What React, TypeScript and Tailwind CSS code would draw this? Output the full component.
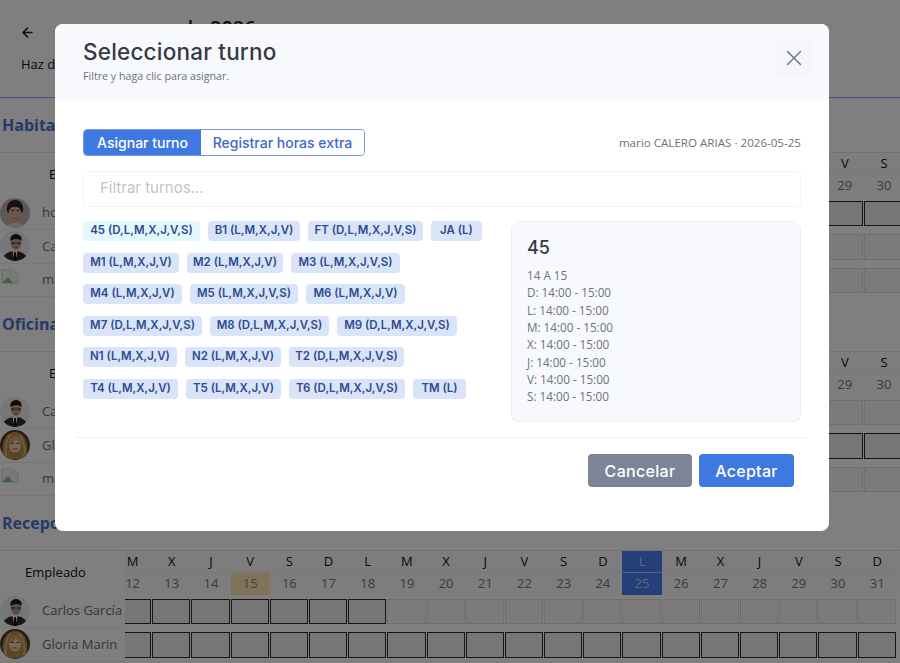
import React from 'react';
import { ArrowLeft, X } from 'lucide-react';

const DAYS = [
  ['M', 12], ['X', 13], ['J', 14], ['V', 15], ['S', 16], ['D', 17], ['L', 18], ['M', 19], ['X', 20], ['J', 21],
  ['V', 22], ['S', 23], ['D', 24], ['L', 25], ['M', 26], ['X', 27], ['J', 28], ['V', 29], ['S', 30], ['D', 31],
] as const;

const SHIFTS = [
  [
    ['45 (D,L,M,X,J,V,S)', 'w-[117px]'], ['B1 (L,M,X,J,V)', 'w-[92px]'], ['FT (D,L,M,X,J,V,S)', 'w-[115px]'], ['JA (L)', 'w-[51px]'],
  ],
  [
    ['M1 (L,M,X,J,V)', 'w-[96px]'], ['M2 (L,M,X,J,V)', 'w-[96px]'], ['M3 (L,M,X,J,V,S)', 'w-[109px]'],
  ],
  [
    ['M4 (L,M,X,J,V)', 'w-[99px]'], ['M5 (L,M,X,J,V,S)', 'w-[108px]'], ['M6 (L,M,X,J,V)', 'w-[99px]'],
  ],
  [
    ['M7 (D,L,M,X,J,V,S)', 'w-[119px]'], ['M8 (D,L,M,X,J,V,S)', 'w-[119px]'], ['M9 (D,L,M,X,J,V,S)', 'w-[120px]'],
  ],
  [
    ['N1 (L,M,X,J,V)', 'w-[94px]'], ['N2 (L,M,X,J,V)', 'w-[96px]'], ['T2 (D,L,M,X,J,V,S)', 'w-[115px]'],
  ],
  [
    ['T4 (L,M,X,J,V)', 'w-[95px]'], ['T5 (L,M,X,J,V)', 'w-[95px]'], ['T6 (D,L,M,X,J,V,S)', 'w-[116px]'], ['TM (L)', 'w-[53px]'],
  ],
];

const HOURS = ['14 A 15', 'D: 14:00 - 15:00', 'L: 14:00 - 15:00', 'M: 14:00 - 15:00', 'X: 14:00 - 15:00', 'J: 14:00 - 15:00', 'V: 14:00 - 15:00', 'S: 14:00 - 15:00'];

type AvatarKind = 'young' | 'suit' | 'blonde' | 'broken';

const Avatar = ({ kind }: { kind: AvatarKind }) => {
  if (kind === 'broken') {
    return (
      <svg width="30" height="30" viewBox="0 0 30 30" className="shrink-0">
        <path d="M2 5h11l5 5v8H2z" fill="#f5f5f5" stroke="#bbb" strokeWidth="0.8" />
        <path d="M2 18l6-6 5 6z" fill="#7fc27a" />
        <path d="M9 2l7 4-5 7z" fill="#e6f2e0" />
      </svg>
    );
  }
  if (kind === 'young') {
    return (
      <svg width="30" height="30" viewBox="0 0 30 30" className="shrink-0 rounded-full">
        <rect width="30" height="30" fill="#b9b2ae" />
        <path d="M7 13c-1-8 4-11 8-11s9 3 8 11l-1 2H8z" fill="#2f2119" />
        <ellipse cx="15" cy="16" rx="6.500" ry="9" fill="#d9a88f" />
        <path d="M8 13c2-5 11-6 14 0l-1-6-6-2-6 2z" fill="#2f2119" />
        <path d="M11 12.500h3M16.500 12.500h3" stroke="#3a2a20" strokeWidth="0.8" />
        <path d="M12.500 20.500h5" stroke="#a8705c" strokeWidth="0.8" />
        <path d="M5 30c2-4 6-5 10-5s8 1 10 5z" fill="#d8d4d0" />
      </svg>
    );
  }
  if (kind === 'suit') {
    return (
      <svg width="30" height="30" viewBox="0 0 30 30" className="shrink-0 rounded-full">
        <rect width="30" height="30" fill="#ececec" />
        <path d="M2 30c1-7 7-10 13-10s12 3 13 10z" fill="#2c2c2e" />
        <path d="M12.500 20h5l-1 6h-3z" fill="#f3f3f3" />
        <path d="M14.200 21h1.600l.8 9h-3.200z" fill="#111" />
        <ellipse cx="16" cy="12" rx="5" ry="7" fill="#c99d86" />
        <path d="M10.500 10c-1-5 3-7 5.500-7s6.500 2 5.500 7c-2-2.500-7-3-11 0z" fill="#1d1714" />
        <path d="M11.500 11.500h3.500v1.500h-3.500zM17 11.500h3.500v1.500H17z" fill="none" stroke="#222" strokeWidth="0.6" />
        <path d="M14 16.500h4" stroke="#7a5546" strokeWidth="0.7" />
      </svg>
    );
  }
  return (
    <svg width="30" height="30" viewBox="0 0 30 30" className="shrink-0 rounded-full">
      <rect width="30" height="30" fill="#4f3a28" />
      <path d="M3 24C1 9 8 2 15 2s14 7 12 22l-3 5H6z" fill="#b98a4e" />
      <path d="M6 26C4 14 9 6 11 5M24 26c2-12-3-20-5-21" fill="none" stroke="#e0bd80" strokeWidth="1.500" />
      <ellipse cx="15" cy="14.500" rx="6" ry="8" fill="#efcfb2" />
      <path d="M9 14c1-5 4-8 7-8s5 3 6 8c-3-1-5-3-6-5-2 3-4 5-7 5z" fill="#cfa263" />
      <path d="M12.500 19h5" stroke="#a5503f" strokeWidth="1.100" />
      <path d="M10.800 13.500h3M16.500 13.500h3" stroke="#4a3426" strokeWidth="0.9" />
    </svg>
  );
};

interface Employee {
  name: string;
  avatar: AvatarKind;
  dark: number;
}

interface ScheduleProps {
  title: string;
  employees: Employee[];
  sideWidth: string;
  headPad: string;
  offset: string;
  dayCount: number;
}

const Schedule = ({ title, employees, sideWidth, headPad, offset, dayCount }: ScheduleProps) => (
  <section className="pt-4 h-[199px] overflow-hidden">
    <h2 className="h-[22px] mb-4 pl-[2px] text-[16px] leading-[22px] font-bold text-[#4a72d4]">{title}</h2>
    <div className="border-t border-[#e2e2e2] flex">
      <div className={`${sideWidth} shrink-0`}>
        <div className={`h-[44px] flex items-center justify-center text-[13px] text-[#111] ${headPad}`}>Empleado</div>
        {employees.map((e) => (
          <div key={e.name} className="h-[33.33px] flex items-center gap-3 border-b border-[#eee]">
            <Avatar kind={e.avatar} />
            <span className="text-[13px] text-[#6d6d6d] whitespace-nowrap">{e.name}</span>
          </div>
        ))}
      </div>
      <div className="flex-1 overflow-hidden">
        <div className={`flex w-max ${offset}`}>
          {DAYS.slice(0, dayCount).map(([letter, day], i) => (
            <div key={day} className="w-[39.2px] shrink-0">
              <div className={`h-[22px] flex items-center justify-center text-[13px] border-b ${day === 25 ? 'bg-[#4a80f0] text-[#b9cdf5] border-[#a9c4fa]' : 'bg-[#fbfbfb] text-[#111] border-[#f0f0f0]'}`}>{letter}</div>
              <div className={`h-[22px] flex items-center justify-center text-[13px] ${day === 25 ? 'bg-[#4a80f0] text-[#b9cdf5]' : day === 15 ? 'bg-[#ffe9b0] text-[#888]' : 'bg-[#fbfbfb] text-[#777]'}`}>{day}</div>
              {employees.map((e) => (
                <div key={e.name} className="h-[33.33px] py-1 pr-[1px]">
                  <div className={`h-full border ${i < e.dark ? 'border-[#2a2a2a] bg-[#ededed]' : 'border-[#dcdcdc] bg-[#f6f6f6]'}`} />
                </div>
              ))}
            </div>
          ))}
        </div>
      </div>
    </div>
  </section>
);

export default function App() {
  return (
    <div className="relative h-[663px] w-[900px] overflow-hidden bg-white font-['Open_Sans',sans-serif]">
      {/* pagina de fondo */}
      <header className="h-[98px] border-b border-[#8f96ff] pl-5 pt-[22px]">
        <div className="flex items-start h-[30px]">
          <ArrowLeft size={15} strokeWidth={2.5} className="mt-[3px] text-[#222]" />
          <h1 className="ml-[87px] mt-[-9px] text-[20px] text-[#222] font-semibold">mayo de 2026</h1>
        </div>
        <p className="mt-[3px] pl-[1px] text-[13px] text-[#111]">Haz doble clic para asignar un turno</p>
      </header>
      <Schedule
        title="Habitaciones"
        sideWidth="w-[159px]"
        headPad=""
        offset=""
        dayCount={19}
        employees={[
          { name: 'hotel demo', avatar: 'young', dark: 19 },
          { name: 'Carlos García', avatar: 'suit', dark: 0 },
          { name: 'mario CALERO', avatar: 'broken', dark: 0 },
        ]}
      />
      <Schedule
        title="Oficina"
        sideWidth="w-[159px]"
        headPad=""
        offset=""
        dayCount={19}
        employees={[
          { name: 'Carlos García', avatar: 'suit', dark: 0 },
          { name: 'Gloria Marin', avatar: 'blonde', dark: 19 },
          { name: 'mario CALERO', avatar: 'broken', dark: 0 },
        ]}
      />
      <Schedule
        title="Recepción"
        sideWidth="w-[125px]"
        headPad="pr-[14px]"
        offset="ml-[-12px]"
        dayCount={20}
        employees={[
          { name: 'Carlos García', avatar: 'suit', dark: 7 },
          { name: 'Gloria Marin', avatar: 'blonde', dark: 20 },
        ]}
      />

      <div className="absolute inset-0 bg-black/50" />

      {/* modal */}
      <div className="absolute left-[55px] top-[24px] w-[774px] h-[507px] rounded-lg bg-white overflow-hidden font-['Inter',sans-serif]">
        <div className="h-[76px] bg-[#f8f9fd] pl-7 pr-[16px] flex items-start justify-between">
          <div className="pt-[13px]">
            <h3 className="text-[22.500px] leading-[30px] font-medium tracking-[0.2px] text-[#343a46]">Seleccionar turno</h3>
            <p className="mt-[2px] text-[10.700px] leading-[15px] text-[#6b7280] font-['Open_Sans',sans-serif]">Filtre y haga clic para asignar.</p>
          </div>
          <button className="mt-[15px] w-[38px] h-[38px] rounded-lg bg-[#f4f6fc] flex items-center justify-center text-[#6b7280]">
            <X size={26} strokeWidth={1.3} />
          </button>
        </div>

        <div className="px-7 pt-[29px]">
          <div className="flex items-center justify-between">
            <div className="flex h-[27px] w-[282px] rounded overflow-hidden border border-[#7a9ae0] text-[14px] font-medium">
              <button className="w-[117px] bg-[#3f78e0] text-white">Asignar turno</button>
              <button className="flex-1 text-[#3f67c8] bg-white">Registrar horas extra</button>
            </div>
            <span className="text-[11.600px] text-[#6b7280] font-['Open_Sans',sans-serif]">mario CALERO ARIAS · 2026-05-25</span>
          </div>

          <input
            placeholder="Filtrar turnos..."
            className="mt-[15px] block w-full h-[36px] rounded border border-[#f1f3f8] px-4 pb-[3px] text-[15px] outline-none placeholder:text-[#bfc4cd]"
          />

          <div className="mt-[14px] flex gap-[29px]">
            <div className="w-[399px] flex flex-col gap-[11.5px] shrink-0">
              {SHIFTS.map((row, r) => (
                <div key={r} className="flex gap-[8px]">
                  {row.map(([label, width], c) => (
                    <button
                      key={label}
                      className={`${width} h-[20px] rounded flex items-center justify-center text-[11.500px] font-semibold whitespace-nowrap text-[#2f4b8f] ${r === 0 && c === 0 ? 'bg-[#e2f8fd]' : 'bg-[#d9e4f8]'}`}
                    >
                      {label}
                    </button>
                  ))}
                </div>
              ))}
            </div>
            <aside className="w-[290px] h-[201px] rounded-lg border border-[#eef0f5] bg-[#f8f9fd] pl-[15px] pt-[13px]">
              <h4 className="text-[18px] leading-[26px] font-medium text-[#343a46]">45</h4>
              <div className="mt-[6px] text-[11.700px] leading-[17.330px] text-[#6b7280] font-['Open_Sans',sans-serif]">
                {HOURS.map((h) => (
                  <div key={h}>{h}</div>
                ))}
              </div>
            </aside>
          </div>
        </div>

        <div className="mx-[22px] mt-[15px] border-t border-[#eceef3] pt-[16px] pr-[13px] flex justify-end gap-[7px] text-[16px] tracking-[0.3px] font-medium text-white">
          <button className="w-[104px] h-[33px] rounded bg-[#7b8595]">Cancelar</button>
          <button className="w-[95px] h-[33px] rounded bg-[#3f78e0]">Aceptar</button>
        </div>
      </div>
    </div>
  );
}
